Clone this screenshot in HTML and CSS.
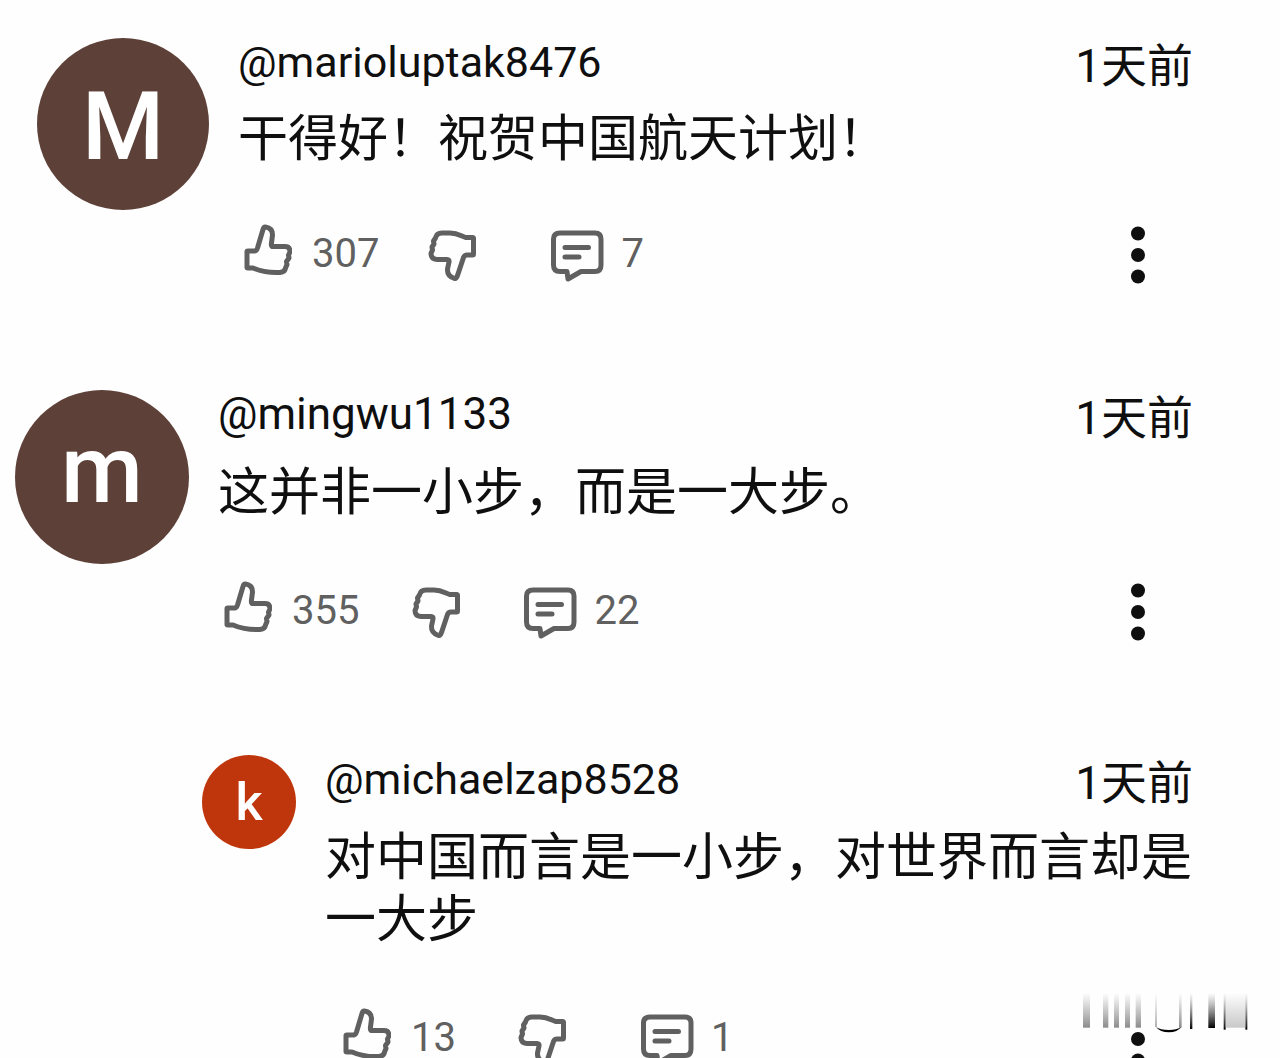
FILE: index.html
```html
<!DOCTYPE html>
<html lang="zh-CN">
<head>
  <title>评论</title>
  <meta charset="UTF-8">
  <link rel="stylesheet" href="styles.css">
</head>
<body>
  <!-- Shared icons -->
  <svg class="icon-defs" aria-hidden="true">
    <symbol id="icon-like" viewBox="0 0 48 60">
      <path d="M3 27.5V43.5Q3 44 4 44H9C16 47 27 49 36 48.5Q41 48 41.5 44L43 40.5L42.5 37.5L45 34L44.5 31L46 28Q46 22.500 41 22.500H28Q27 22 27.500 19L28.500 11Q28.500 4 21.500 3Q20 2.500 19 5.500L13.500 24Q12.500 27 10.500 27H4Q3 27 3 27.500Z"/>
    </symbol>
    <symbol id="icon-dislike" viewBox="0 0 48 60">
      <path d="M45.500 14.500V30Q45.500 31 44.500 31H39Q36.500 31 35.500 33.500L30 50Q28.500 55 26.500 54.500Q19 52 19.500 45L21 38Q21.500 35.500 19 35.500H9Q3 35 3 29.500L4.500 26L4 23L6 20L5.500 17L7.500 14Q8.500 9 14 9H22C30 9 34 12.500 38 13.500H44.500Q45.500 13.500 45.500 14.500Z"/>
    </symbol>
    <symbol id="icon-reply" viewBox="0 0 54 60">
      <path d="M9 9H44Q50 9 50 15V41Q50 47.500 44 47.500H30L17 55L16 47.500H9Q2.500 47.500 2.500 41V15Q2.500 9 9 9Z"/>
      <path d="M14 23.500H37.500M14 33H28"/>
    </symbol>
    <symbol id="icon-more" viewBox="0 0 14 60">
      <circle cx="7" cy="9.500" r="7"/>
      <circle cx="7" cy="31" r="7"/>
      <circle cx="7" cy="52.500" r="7"/>
    </symbol>
  </svg>

  <main class="comments">
    <article class="comment comment-first">
      <div class="avatar">M</div>
      <div class="content">
        <header class="comment-header">
          <a class="author" href="#">@marioluptak8476</a>
          <time class="time">1天前</time>
        </header>
        <p class="text">干得好！祝贺中国航天计划！</p>
        <div class="actions">
          <button class="action like" aria-label="赞"><svg class="icon"><use href="#icon-like"/></svg><span>307</span></button>
          <button class="action dislike" aria-label="踩"><svg class="icon"><use href="#icon-dislike"/></svg></button>
          <button class="action reply" aria-label="回复"><svg class="icon icon-wide"><use href="#icon-reply"/></svg><span>7</span></button>
          <button class="action more" aria-label="更多"><svg class="icon-more"><use href="#icon-more"/></svg></button>
        </div>
      </div>
    </article>

    <article class="comment comment-second">
      <div class="avatar avatar-lower">m</div>
      <div class="content">
        <header class="comment-header">
          <a class="author" href="#">@mingwu1133</a>
          <time class="time">1天前</time>
        </header>
        <p class="text">这并非一小步，而是一大步。</p>
        <div class="actions">
          <button class="action like" aria-label="赞"><svg class="icon"><use href="#icon-like"/></svg><span>355</span></button>
          <button class="action dislike" aria-label="踩"><svg class="icon"><use href="#icon-dislike"/></svg></button>
          <button class="action reply" aria-label="回复"><svg class="icon icon-wide"><use href="#icon-reply"/></svg><span>22</span></button>
          <button class="action more" aria-label="更多"><svg class="icon-more"><use href="#icon-more"/></svg></button>
        </div>
      </div>
    </article>

    <article class="comment comment-nested">
      <div class="avatar avatar-small">k</div>
      <div class="content">
        <header class="comment-header">
          <a class="author" href="#">@michaelzap8528</a>
          <time class="time">1天前</time>
        </header>
        <p class="text">对中国而言是一小步，对世界而言却是一大步</p>
        <div class="actions">
          <button class="action like" aria-label="赞"><svg class="icon"><use href="#icon-like"/></svg><span>13</span></button>
          <button class="action dislike" aria-label="踩"><svg class="icon"><use href="#icon-dislike"/></svg></button>
          <button class="action reply" aria-label="回复"><svg class="icon icon-wide"><use href="#icon-reply"/></svg><span>1</span></button>
          <button class="action more" aria-label="更多"><svg class="icon-more"><use href="#icon-more"/></svg></button>
        </div>
      </div>
    </article>

    <!-- Faded streaks in the corner -->
    <svg class="streaks" viewBox="0 0 510 120" aria-hidden="true">
      <defs>
        <linearGradient id="fade-gray" x1="0" y1="0" x2="0" y2="1">
          <stop offset="0" stop-color="#888" stop-opacity="0"/>
          <stop offset="1" stop-color="#777" stop-opacity=".85"/>
        </linearGradient>
        <linearGradient id="fade-dark" x1="0" y1="0" x2="0" y2="1">
          <stop offset="0" stop-color="#555" stop-opacity="0"/>
          <stop offset="1" stop-color="#000"/>
        </linearGradient>
        <linearGradient id="fade-light" x1="0" y1="0" x2="0" y2="1">
          <stop offset="0" stop-color="#bbb" stop-opacity="0"/>
          <stop offset="1" stop-color="#bbb" stop-opacity=".8"/>
        </linearGradient>
      </defs>
      <rect width="510" height="111" fill="#fefefe"/>
      <g fill="url(#fade-gray)">
        <rect x="9" y="0" width="21" height="104"/>
        <rect x="69" y="0" width="16" height="104"/>
        <rect x="102" y="0" width="15" height="104"/>
        <rect x="135" y="0" width="15" height="104"/>
        <rect x="167" y="0" width="16" height="104"/>
        <rect x="226" y="0" width="4" height="102"/>
        <rect x="297" y="0" width="8" height="104"/>
      </g>
      <path d="M228 102Q240 118 267 118Q292 118 304 102Q290 111 267 111Q240 111 228 102Z"/>
      <g fill="url(#fade-dark)">
        <rect x="330" y="0" width="7" height="108"/>
        <rect x="385" y="0" width="20" height="105"/>
        <rect x="431" y="0" width="6" height="110"/>
        <rect x="496" y="0" width="6" height="110"/>
      </g>
      <rect x="437" y="0" width="59" height="104" fill="url(#fade-light)"/>
    </svg>
  </main>
</body>
</html>
```

FILE: styles.css
```css
body {
  margin: 0;
  font-family: Roboto, 'Noto Sans CJK SC', sans-serif;
  color: #0f0f0f;
  background-color: #fefefe;
}

.icon-defs {
  display: none;
}

.comments {
  position: relative;
  height: 100vh;
  box-sizing: border-box;
  padding-top: 38px;
  padding-right: 87px;
  overflow: hidden;
}

.comment {
  display: flex;
  align-items: flex-start;
  gap: 29px;
}

.comment-first {
  padding-left: 37px;
  margin-bottom: 106px;
}

.comment-second {
  padding-left: 15px;
  margin-bottom: 114px;
}

.comment-nested {
  padding-left: 202px;
}

.avatar {
  display: flex;
  align-items: center;
  justify-content: center;
  flex-shrink: 0;
  width: 174px;
  height: 174px;
  box-sizing: border-box;
  border-radius: 50%;
  font-size: 94px;
  font-weight: 500;
  color: #fff;
  background-color: #5d4037;
}

.comment-first .avatar {
  width: 172px;
  height: 172px;
  padding-top: 6px;
}

.avatar-lower {
  padding-bottom: 14px;
}

.avatar-small {
  width: 94px;
  height: 94px;
  font-size: 52px;
  background-color: #bf360c;
}

.content {
  flex: 1;
  min-width: 0;
}

.comment-header {
  display: flex;
  justify-content: space-between;
  height: 50px;
  line-height: 48px;
}

.author {
  font-size: 43px;
  color: inherit;
  text-decoration: none;
}

.comment-second .author {
  font-size: 44px;
}

.time {
  font-size: 46px;
  line-height: 56px;
}

.text {
  margin: 22px 0 57px;
  font-size: 51px;
  line-height: 62px;
}

.comment-first .text {
  margin: 20px 0 54px;
  font-size: 50px;
}

.actions {
  display: flex;
  align-items: center;
  height: 60px;
  padding-left: 6px;
}

.action {
  display: flex;
  align-items: center;
  gap: 20px;
  padding: 0;
  border: none;
  background: none;
  font-family: inherit;
  font-size: 40px;
  line-height: 40px;
  color: #606060;
  cursor: pointer;
}

.reply {
  gap: 16px;
}

.dislike {
  margin-left: 49px;
  margin-right: 75px;
}

.comment-second .dislike {
  margin-left: 53px;
  margin-right: 64px;
}

.comment-nested .actions {
  padding-left: 18px;
}

.comment-nested .dislike {
  margin-left: 62px;
}

.more {
  margin-left: auto;
  margin-right: 48px;
  color: #0f0f0f;
}

.icon {
  width: 48px;
  height: 60px;
  fill: none;
  stroke: currentColor;
  stroke-width: 5;
  stroke-linecap: round;
  stroke-linejoin: round;
}

.icon-wide {
  width: 54px;
}

.icon-more {
  width: 14px;
  height: 60px;
  fill: currentColor;
}

.streaks {
  position: absolute;
  right: 30px;
  bottom: 25px;
  width: 170px;
  height: 40px;
}
```
